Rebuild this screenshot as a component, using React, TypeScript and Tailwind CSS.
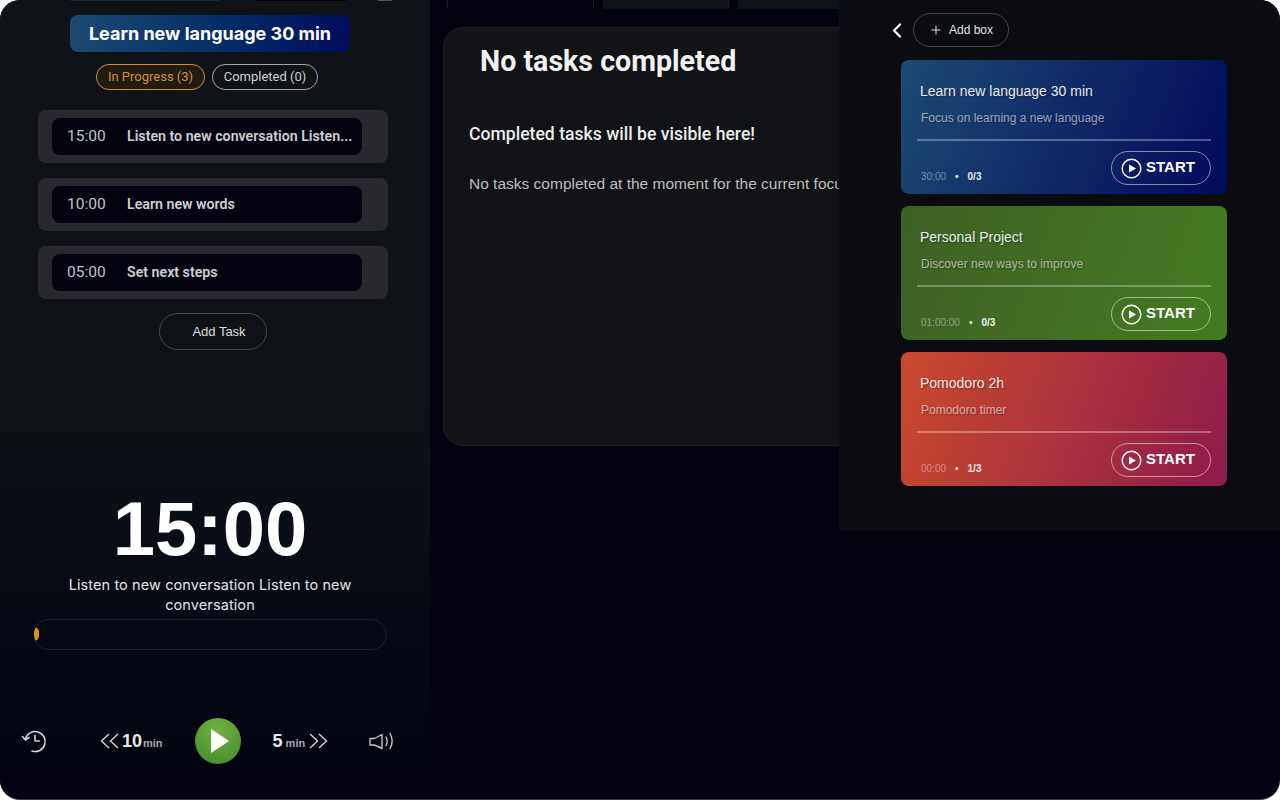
import { Plus } from "lucide-react";

const tasks = [
  { time: "15:00", name: "Listen to new conversation Listen..." },
  { time: "10:00", name: "Learn new words" },
  { time: "05:00", name: "Set next steps" },
];

const boxes = [
  {
    title: "Learn new language 30 min",
    desc: "Focus on learning a new language",
    time: "30:00",
    count: "0/3",
    bg: "bg-[linear-gradient(110deg,#1d4a72,#020a5c)]",
  },
  {
    title: "Personal Project",
    desc: "Discover new ways to improve",
    time: "01:00:00",
    count: "0/3",
    bg: "bg-[linear-gradient(110deg,#3e6026,#447c22)]",
  },
  {
    title: "Pomodoro 2h",
    desc: "Pomodoro timer",
    time: "00:00",
    count: "1/3",
    bg: "bg-[linear-gradient(110deg,#cb4a2d,#8e1b4c)]",
  },
];

function DoubleChevron({ flip }: { flip?: boolean }) {
  return (
    <svg width="19" height="16" viewBox="0 0 19 16" fill="none" stroke="#d4d4d8" strokeWidth="1.4" className={flip ? "rotate-180" : ""}>
      <path d="M9 1 1.500 8 9 15" />
      <path d="M18 1 10.500 8 18 15" />
    </svg>
  );
}

function Speaker() {
  return (
    <svg width="25" height="18" viewBox="0 0 25 18" fill="none" stroke="#c4c4c8" strokeWidth="1.4" strokeLinejoin="round" strokeLinecap="round">
      <path d="M1 6.500h4.500L13 2.500v14l-7.500-3.500H1z" />
      <path d="M17 5c1.400 2.600 1.400 6 0 8.500" />
      <path d="M21 1.500c2.600 4.500 2.600 10.500 0 15" />
    </svg>
  );
}

function RestoreClock() {
  return (
    <svg width="26" height="26" viewBox="0 0 26 26" fill="none" stroke="#d4d4d8" strokeWidth="1.600" strokeLinecap="round" strokeLinejoin="round">
      <path d="M4.500 11A10 10 0 1 1 11 23" />
      <path d="M1.500 8.500 4.500 12 8 9.500" />
      <path d="M14 7.500V13h4.500" />
    </svg>
  );
}

function BoxCard({ box }: { box: (typeof boxes)[number] }) {
  return (
    <div className={`h-[134px] rounded-lg px-4 pt-[22px] font-['Liberation_Sans',sans-serif] ${box.bg}`}>
      <p className="pl-[3px] text-[14px] leading-[18px] text-white/90 [text-shadow:1px_1px_2px_rgba(0,0,0,0.4)]">{box.title}</p>
      <p className="mt-[10px] pl-1 text-[12px] leading-[16px] text-white/55 [text-shadow:1px_1px_2px_rgba(0,0,0,0.3)]">{box.desc}</p>
      <div className="mt-[13px] h-[2px] w-[294px] bg-white/30" />
      <div className="mt-[10px] flex w-[294px] items-end justify-between">
        <div className="flex items-center pb-[2px] pl-1 text-[10px] leading-[12px]">
          <span className="text-white/40">{box.time}</span>
          <span className="mx-[9px] text-white">•</span>
          <span className="font-bold text-white/90">{box.count}</span>
        </div>
        <button className="flex h-[34px] w-[100px] items-center rounded-full border border-white/50 pl-[9px]">
          <svg width="21" height="21" viewBox="0 0 21 21" fill="none">
            <circle cx="10.500" cy="10.500" r="9.300" stroke="white" strokeWidth="1.400" />
            <path d="M8 6.500 15 10.500 8 14.500z" fill="white" />
          </svg>
          <span className="mb-[1px] ml-[4px] text-[15px] font-bold text-white">START</span>
        </button>
      </div>
    </div>
  );
}

export default function App() {
  return (
    <div className="h-[800px] w-[1280px] overflow-hidden bg-white">
      <div className="relative flex h-[800px] w-[1280px] overflow-hidden rounded-[20px] border-b border-[#3a3a40] bg-[#02030f]">
        {/* timer column */}
        <aside className="flex w-[430px] shrink-0 flex-col items-center bg-gradient-to-b from-[#0f1317] via-[#0f1317] to-[#02030f] pr-[10px] font-['Inter',sans-serif]">
          <div className="relative h-[15px] w-full">
            <div className="absolute left-[70px] top-0 h-px w-[150px] bg-[#20252c]" />
            <div className="absolute left-[256px] top-0 h-px w-[90px] bg-black" />
            <div className="absolute left-[378px] top-0 h-px w-[14px] bg-[#55585c]" />
          </div>
          <div className="flex h-[37px] w-[280px] items-center justify-center rounded-lg bg-gradient-to-r from-[#1d4a72] to-[#020a5c] text-[18px] font-bold text-white">
            Learn new language 30 min
          </div>
          <div className="mr-[6px] mt-[12px] flex gap-[7px] font-['Roboto',sans-serif] text-[13px]">
            <span className="flex h-[26px] w-[109px] items-center justify-center rounded-full border border-[#d3922f] bg-[#211b14] text-[#d3922f]">
              In Progress (3)
            </span>
            <span className="flex h-[26px] w-[106px] items-center justify-center rounded-full border border-[#a3a5a8] text-[#d0d0d0]">
              Completed (0)
            </span>
          </div>
          <div className="ml-[6px] mt-[20px] flex w-[350px] flex-col gap-[15px] font-['Roboto',sans-serif]">
            {tasks.map((task) => (
              <div key={task.time} className="flex h-[53px] items-center rounded-lg bg-[#28282e] pl-[14px]">
                <div className="flex h-[37px] w-[310px] items-center rounded-lg bg-[#02030f]">
                  <span className="w-[75px] pl-[15px] text-[15.500px] text-[#c4c4c4]">{task.time}</span>
                  <span className="whitespace-nowrap text-[14.200px] font-semibold text-[#d0d0d0]">{task.name}</span>
                </div>
              </div>
            ))}
          </div>
          <button className="ml-[6px] mt-[14px] flex h-[37px] w-[108px] items-center justify-center rounded-full border border-[#44464a] pl-[12px] font-['Liberation_Sans',sans-serif] text-[13px] text-[#dedede]">
            Add Task
          </button>

          <p className="mt-[135px] font-['Liberation_Sans',sans-serif] text-[76px] font-bold leading-[88px] text-white">15:00</p>
          <p className="mt-[2px] w-[300px] text-center text-[14.500px] leading-[20px] tracking-[0.1px] text-[#e4e4e4]">
            Listen to new conversation Listen to new conversation
          </p>
          <div className="mt-[4px] h-[31px] w-[354px] overflow-hidden rounded-full border border-[#1c1f27] pt-[7px]">
            <div className="h-[14px] w-[5px] rounded-r-full bg-[#d3922f]" />
          </div>

          <div className="mt-[68px] flex w-full items-center font-['Liberation_Sans',sans-serif]">
            <span className="ml-[21px]"><RestoreClock /></span>
            <div className="ml-[53px] flex items-baseline">
              <span className="mr-[3px] self-center"><DoubleChevron /></span>
              <span className="text-[18px] font-bold text-[#e8e8e8]">10</span>
              <span className="ml-[1px] text-[11px] font-bold text-[#a8a8ac]">min</span>
            </div>
            <button className="ml-[32px] flex h-[46px] w-[46px] items-center justify-center rounded-full bg-[radial-gradient(circle_at_50%_25%,#74b043,#3f8a2a)]">
              <svg width="18" height="24" viewBox="0 0 18 24" className="ml-[4px]">
                <path d="M0 0 18 12 0 24z" fill="white" />
              </svg>
            </button>
            <div className="ml-[32px] flex items-baseline">
              <span className="text-[18px] font-bold text-[#e8e8e8]">5</span>
              <span className="ml-[3px] text-[11px] font-bold text-[#a8a8ac]">min</span>
              <span className="ml-[4px] self-center"><DoubleChevron flip /></span>
            </div>
            <span className="ml-[41px]"><Speaker /></span>
          </div>
        </aside>

        {/* completed tasks */}
        <main className="min-w-0 flex-1 pl-[13px]">
          <div className="flex h-[9px] pl-[4px]">
            <div className="h-[9px] w-[147px] border-x border-[#1a1d22]" />
            <div className="ml-[9px] h-[9px] w-[126px] border-r border-[#1a1d22] bg-[#0e1116]" />
            <div className="ml-[9px] h-[9px] flex-1 bg-[#0e1116]" />
          </div>
          <section className="mt-[18px] h-[419px] w-[800px] rounded-[20px] border border-[#1d2026] bg-[#111316]">
            <h1 className="ml-[36px] mt-[13px] font-['Roboto',sans-serif] text-[28.600px] font-bold leading-[40px] text-[#f2f2f2]">No tasks completed</h1>
            <h2 className="ml-[25px] mt-[41px] font-['Roboto',sans-serif] text-[17.600px] font-medium leading-[24px] text-[#ececec]">Completed tasks will be visible here!</h2>
            <p className="ml-[25px] mt-[27px] font-['Liberation_Sans',sans-serif] text-[15.500px] leading-[22px] text-[#bdbdbd]">
              No tasks completed at the moment for the current focus box.
            </p>
          </section>
        </main>

        {/* box list overlay */}
        <div className="absolute right-0 top-0 h-[531px] w-[441px] bg-[#0a0c11] pl-[62px]">
          <div className="flex h-[60px] items-center">
            <svg width="10" height="15" viewBox="0 0 10 15" fill="none" stroke="white" strokeWidth="2.200" strokeLinecap="round" strokeLinejoin="round" className="mr-[11px] -ml-[9px]">
              <path d="M8 1.500 2 7.500l6 6" />
            </svg>
            <button className="flex h-[34px] w-[96px] items-center justify-center gap-[6px] rounded-full border border-[#44464a] font-['Liberation_Sans',sans-serif] text-[12px] text-[#e4e4e4]">
              <Plus size={14} strokeWidth={1.500} className="text-white" />
              Add box
            </button>
          </div>
          <div className="flex w-[326px] flex-col gap-[12px]">
            {boxes.map((box) => (
              <BoxCard key={box.title} box={box} />
            ))}
          </div>
        </div>
      </div>
    </div>
  );
}
